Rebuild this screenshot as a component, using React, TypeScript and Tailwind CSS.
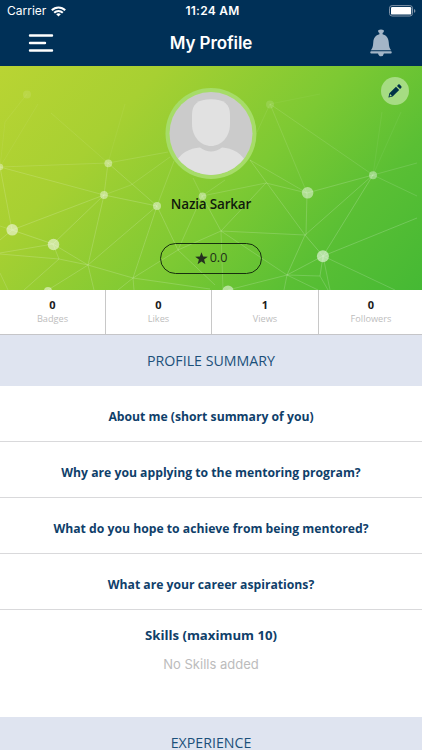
import React from "react";

const lines: number[][] = [
  [0, 167, 108, 163, 0.14], [0, 167, 104, 195, 0.18], [0, 167, 12, 230, 0.18], [0, 167, 38, 104, 0.07],
  [27, 94, 5, 122, 0.07], [5, 122, 0, 167, 0.07], [51, 113, 108, 163, 0.09], [108, 163, 125, 104, 0.06],
  [108, 163, 104, 195, 0.17], [108, 163, 168, 152, 0.14], [108, 163, 157, 206, 0.18],
  [104, 195, 157, 206, 0.2], [104, 195, 131, 185, 0.14], [131, 185, 170, 157, 0.14],
  [104, 195, 12, 230, 0.2], [104, 195, 53, 244, 0.2], [104, 195, 88, 265, 0.2],
  [157, 206, 88, 265, 0.2], [157, 206, 133, 278, 0.2], [157, 206, 178, 250, 0.2], [157, 206, 174, 161, 0.15],
  [12, 230, 53, 244, 0.22], [12, 230, 0, 240, 0.2], [12, 230, 0, 226, 0.15],
  [53, 244, 0, 253, 0.2], [53, 244, 59, 259, 0.2], [53, 244, 88, 265, 0.2],
  [0, 254, 59, 259, 0.2], [59, 259, 88, 265, 0.2], [59, 259, 24, 290, 0.2], [0, 273, 8, 290, 0.16],
  [88, 265, 48, 290, 0.2], [88, 265, 94, 290, 0.2], [88, 265, 133, 278, 0.2],
  [133, 278, 178, 250, 0.2], [133, 278, 118, 290, 0.2], [133, 278, 134, 290, 0.2], [133, 278, 210, 289, 0.2],
  [178, 250, 202, 196, 0.17], [178, 250, 221, 231, 0.2], [178, 250, 215, 285, 0.2],
  [202, 196, 221, 231, 0.2], [202, 196, 193, 178, 0.15], [202, 196, 266, 183, 0.17], [202, 196, 225, 180, 0.15],
  [270, 104, 307, 193, 0.13], [270, 104, 373, 175, 0.13], [270, 104, 257, 132, 0.08], [270, 104, 320, 94, 0.05],
  [250, 160, 307, 193, 0.17], [250, 160, 305, 235, 0.2], [266, 183, 307, 193, 0.18], [266, 183, 221, 231, 0.2],
  [307, 193, 373, 175, 0.2], [307, 193, 306, 235, 0.2], [305, 235, 373, 175, 0.2], [221, 231, 305, 235, 0.2],
  [323, 256, 373, 175, 0.22], [305, 235, 323, 256, 0.24], [305, 235, 287, 275, 0.22],
  [221, 231, 287, 275, 0.2], [221, 231, 223, 290, 0.17],
  [323, 256, 417, 218, 0.22], [323, 256, 395, 290, 0.2], [323, 256, 287, 275, 0.22],
  [323, 256, 320, 276, 0.22], [323, 256, 330, 290, 0.2], [287, 275, 320, 276, 0.2],
  [320, 276, 328, 290, 0.2], [287, 275, 284, 290, 0.2], [287, 275, 228, 290, 0.2], [287, 275, 318, 290, 0.2],
  [373, 175, 417, 163, 0.15], [373, 175, 417, 196, 0.15], [373, 175, 382, 112, 0.07], [373, 175, 401, 112, 0.07],
];

const nodes: number[][] = [
  [27, 94.5, 4, 0.1], [0, 167, 3.2, 0.35], [108.3, 163.3, 3.9, 0.38], [104, 195, 3.9, 0.42],
  [157, 206, 4, 0.45], [12.2, 229.8, 5.8, 0.52], [53.5, 244.5, 5.8, 0.52], [202.5, 196.2, 3.8, 0.4],
  [48, 291, 4, 0.5], [270, 104.5, 4, 0.12], [307.6, 192.8, 5.8, 0.46], [373, 175.3, 4, 0.38],
  [322.9, 256.3, 6, 0.55], [228, 291, 5.5, 0.5],
];

function StatusBar() {
  return (
    <div className="flex h-[22px] items-center justify-between pl-[7px] pr-[6px] text-[12px] leading-[22px]">
      <div className="flex w-[118px] items-center gap-[5px]">
        <span className="whitespace-nowrap text-[12px]">Carrier</span>
        <svg width="15" height="11" viewBox="0 0 15 11" fill="none" stroke="white" strokeWidth="2">
          <path d="M.8 4.2A9.4 9.4 0 0 1 14.2 4.2" />
          <path d="M3.2 6.7A6 6 0 0 1 11.8 6.7" />
          <path d="M5.2 8.2Q7.5 6.5 9.8 8.2L7.5 10.6Z" fill="white" stroke="none" />
        </svg>
      </div>
      <span className="pl-[4px] text-[12px] font-semibold tracking-[0.25px]">11:24 AM</span>
      <div className="flex w-[120px] justify-end">
        <svg width="27" height="12" viewBox="0 0 27 12">
          <rect x="0.5" y="0.6" width="23" height="10.4" rx="2.6" fill="none" stroke="#8093a8" />
          <rect x="2" y="2" width="20.2" height="7.6" rx="1.2" fill="white" />
          <path d="M25 4q1.4.6 1.4 1.9T25 7.8Z" fill="#8093a8" />
        </svg>
      </div>
    </div>
  );
}

function Header() {
  return (
    <header className="h-[66px] bg-[#003057] font-['Inter',sans-serif] text-white">
      <StatusBar />
      <div className="flex h-[42px] items-center justify-between px-[28px]">
        <svg width="26" height="20" viewBox="0 0 26 20" stroke="white" strokeWidth="2.4" strokeLinecap="round">
          <path d="M2 2.5H24M2 10H17M2 17.5H24" />
        </svg>
        <h1 className="text-[17px] font-semibold leading-[42px] tracking-[-0.1px]">My Profile</h1>
        <svg width="26" height="30" viewBox="0 0 26 30" fill="#a3b5c7">
          <path d="M10.2 2.2Q13 .6 15.8 2.2V4L14.6 5V6.2C18.3 7 20.4 10 20.7 14C21 18.5 21.6 20.5 23.1 22.2H2.9C4.4 20.5 5 18.5 5.3 14C5.6 10 7.7 7 11.4 6.2V5L10.2 4Z" />
          <path d="M2.8 23.2H23.2Q24.5 24.3 23.2 25.4H15.9Q15.4 28.2 13 28.2T10.1 25.4H2.8Q1.5 24.3 2.8 23.2Z" />
        </svg>
      </div>
    </header>
  );
}

function Hero() {
  return (
    <section className="relative h-[224px] overflow-hidden bg-[linear-gradient(132deg,#b9d433_0%,#a7d032_26%,#7dc933_56%,#5abf34_78%,#45b934_100%)]">
      <svg className="absolute inset-0" width="422" height="224" viewBox="0 66 422 224">
        {lines.map(([x1, y1, x2, y2, o], i) => (
          <line key={i} x1={x1} y1={y1} x2={x2} y2={y2} stroke="white" strokeOpacity={o * 0.85} />
        ))}
        {nodes.map(([cx, cy, r, o], i) => (
          <circle key={i} cx={cx} cy={cy} r={r} fill="white" fillOpacity={o} />
        ))}
      </svg>
      <div className="relative flex flex-col items-center pt-[22px]">
        <svg width="92" height="92" viewBox="0 0 92 92">
          <defs>
            <clipPath id="avatar">
              <circle cx="46" cy="45.5" r="41.5" />
            </clipPath>
          </defs>
          <circle cx="46" cy="45.5" r="45.5" fill="#a6dc68" />
          <g clipPath="url(#avatar)">
            <rect width="92" height="92" fill="#cbcbcb" />
            <path d="M9 78C14 65 25 60 35 59.5Q46 67.5 57 59.5C67 60 78 65 83 78V92H9Z" fill="#e1e1e1" />
            <path d="M46 11.3C59 11.3 65 16 65 27V36C65 49 56 58 46 58S27 49 27 36V27C27 16 33 11.3 46 11.3Z" fill="#e1e1e1" />
          </g>
        </svg>
        <h2 className="mt-[14px] text-[13.5px] font-semibold leading-5 tracking-[-0.18px] text-[#101b0c]">Nazia Sarkar</h2>
        <div className="mt-[28.5px] flex h-[31px] w-[102px] items-center justify-center gap-[2px] rounded-full border-[1.5px] border-[#17300f] text-[12.5px] leading-none text-[#1e2e18]">
          <svg width="13" height="13" viewBox="0 0 12 12" fill="#25301f">
            <path d="M6 .2 7.5 4.2 11.8 4.4 8.4 7 9.6 11.2 6 8.8 2.4 11.2 3.6 7 .2 4.4 4.5 4.2Z" />
          </svg>
          <span>0.0</span>
        </div>
      </div>
      <button className="absolute right-[13px] top-[11px] flex size-7 items-center justify-center rounded-full bg-[#a6dc83]" aria-label="Edit profile">
        <svg width="14" height="14" viewBox="0 0 14 14" fill="#003348">
          <path d="M.4 13.6 1.4 9.2 8 2.8 11.2 6 4.6 12.5ZM9 1.9 10.3.6Q11 0 11.7.6L13.3 2.3Q14 3 13.3 3.7L12.1 5Z" />
          <path d="M1.6 12.4 2.2 10.1 3.8 11.8Z" fill="#a6dc83" />
        </svg>
      </button>
    </section>
  );
}

const stats = [["0", "Badges"], ["0", "Likes"], ["1", "Views"], ["0", "Followers"]];

function Stats() {
  return (
    <section className="grid h-[45px] grid-cols-[106px_106px_107px_1fr] border-b border-[#c5c5c8]">
      {stats.map(([value, label]) => (
        <div key={label} className="flex flex-col items-center border-r border-[#c8c8c8] pt-[7px] last:border-r-0 last:pl-[1px]">
          <b className="text-[11px] font-bold leading-4 text-[#1b1b1b]">{value}</b>
          <span className="text-[9.2px] leading-[11px] text-[#bdbdbd]">{label}</span>
        </div>
      ))}
    </section>
  );
}

function Question({ text }: { text: string }) {
  return (
    <div className="flex h-14 items-center justify-center border-b border-[#d9d9db] pt-[6px]">
      <h3 className="whitespace-nowrap text-[12.2px] font-bold leading-5 text-[#0f406a]">{text}</h3>
    </div>
  );
}

function Band({ text }: { text: string }) {
  return <h2 className="h-[51px] bg-[#dfe4f0] text-center text-[14.2px] leading-[52px] text-[#1b507a]">{text}</h2>;
}

export default function App() {
  return (
    <main className="h-[750px] w-[422px] overflow-hidden bg-white font-['Open_Sans',sans-serif]">
      <Header />
      <Hero />
      <Stats />
      <Band text="PROFILE SUMMARY" />
      <Question text="About me (short summary of you)" />
      <Question text="Why are you applying to the mentoring program?" />
      <Question text="What do you hope to achieve from being mentored?" />
      <Question text="What are your career aspirations?" />
      <section className="flex h-[107px] flex-col items-center pt-[15px]">
        <h3 className="text-[13.2px] font-bold leading-5 text-[#0f406a]">Skills (maximum 10)</h3>
        <p className="mt-[9px] font-['Inter',sans-serif] text-[13px] leading-5 text-[#bcbcbc]">No Skills added</p>
      </section>
      <Band text="EXPERIENCE" />
    </main>
  );
}
